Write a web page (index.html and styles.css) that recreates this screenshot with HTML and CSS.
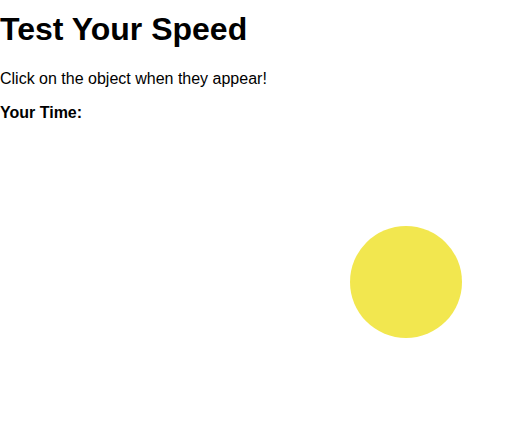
FILE: index.html
```html
<!DOCTYPE html>
<html>
<head>
<meta charset="utf-8">
<link rel="stylesheet" href="styles.css">
</head>
<body>
<h1 class="title">Test Your Speed</h1>
<p class="intro">Click on the object when they appear!</p>
<p class="time"><b>Your Time: </b><span class="time-value"></span></p>
<div class="stage">
  <div class="shape"></div>
</div>
</body>
</html>
```
FILE: styles.css
```css
html, body {
  margin: 0;
  padding: 0;
  background: #ffffff;
}
body {
  font-family: "Liberation Sans", Arial, sans-serif;
  color: #000;
}
.title {
  font-size: 32px;
  font-weight: bold;
  margin: 11px 0 22px;
}
.intro {
  font-size: 16px;
  margin: 16px 0;
}
.time {
  font-size: 16px;
  margin: 16px 0;
}
.stage {
  position: relative;
  height: 280px;
}
.shape {
  position: absolute;
  left: 350px;
  top: 88px;
  width: 112px;
  height: 112px;
  border-radius: 50%;
  background: #f2e74f;
}
```
